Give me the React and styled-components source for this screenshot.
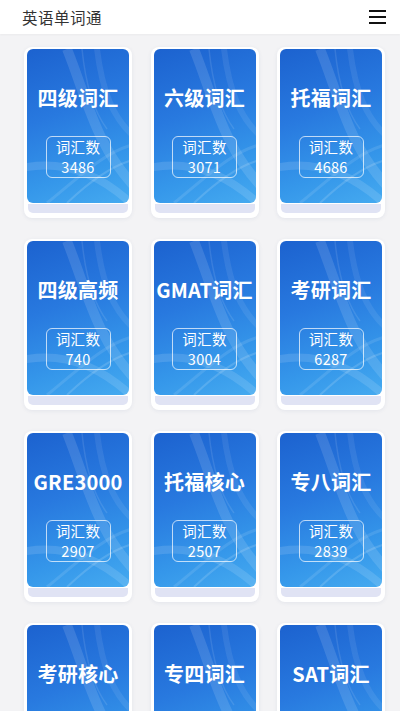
import styled, { createGlobalStyle } from 'styled-components';

const GlobalStyle = createGlobalStyle`
  html, body {
    margin: 0;
    padding: 0;
    background: #f3f3f5;
    font-family: "Noto Sans CJK SC", "Noto Sans", sans-serif;
    overflow: hidden;
  }
`;

const Page = styled.div`
  width: 400px;
  min-height: 711px;
  background: #f3f3f5;
`;

const Header = styled.header`
  height: 34px;
  background: #fff;
  display: flex;
  align-items: center;
  justify-content: space-between;
  padding: 0 13px 0 22px;
  box-sizing: border-box;
  box-shadow: 0 1px 2px rgba(0, 0, 0, 0.04);
`;

const Title = styled.h1`
  margin: 0;
  font-size: 15.5px;
  font-weight: 400;
  color: #333;
  letter-spacing: 0.5px;
`;

const MenuButton = styled.button`
  width: 20px;
  height: 20px;
  border: 0;
  background: none;
  display: flex;
  flex-direction: column;
  justify-content: space-between;
  align-items: center;
  padding: 3px 0;
  box-sizing: border-box;

  span {
    display: block;
    width: 17px;
    height: 2px;
    background: #111;
  }
`;

const Grid = styled.div`
  display: grid;
  grid-template-columns: repeat(3, 108px);
  column-gap: 18.5px;
  row-gap: 21px;
  padding: 13px 0 0 24px;
`;

const Card = styled.div`
  background: #fff;
  border-radius: 8px;
  padding: 2px 3px 5px;
  box-shadow: 0 1px 4px rgba(40, 60, 120, 0.08);
  display: flex;
  flex-direction: column;
`;

const Cover = styled.div`
  position: relative;
  height: 154px;
  border-radius: 6px;
  overflow: hidden;
  background: linear-gradient(160deg, #1c62cf 0%, #2879df 40%, #3597ea 75%, #45aaf0 100%);
  display: flex;
  flex-direction: column;
  align-items: center;
  color: #fff;
`;

const Streaks = styled.svg`
  position: absolute;
  inset: 0;
  width: 100%;
  height: 100%;
  pointer-events: none;
`;

const Name = styled.div`
  position: relative;
  margin-top: 36px;
  font-size: 20px;
  font-weight: 700;
  line-height: 26px;
  white-space: nowrap;
  letter-spacing: 0.2px;
`;

const CountBox = styled.div`
  position: relative;
  margin-top: 25px;
  width: 65px;
  height: 42px;
  box-sizing: border-box;
  border: 1px solid rgba(255, 255, 255, 0.7);
  border-radius: 6px;
  display: flex;
  flex-direction: column;
  align-items: center;
  justify-content: center;
  font-size: 14.5px;
  line-height: 20px;
  letter-spacing: 0.3px;
`;

const Strip = styled.div`
  height: 9px;
  margin: 1px 1px 0;
  background: #e0e3f4;
  border-radius: 0 0 5px 5px;
`;

const books = [
  { name: '四级词汇', count: 3486 },
  { name: '六级词汇', count: 3071 },
  { name: '托福词汇', count: 4686 },
  { name: '四级高频', count: 740 },
  { name: 'GMAT词汇', count: 3004 },
  { name: '考研词汇', count: 6287 },
  { name: 'GRE3000', count: 2907 },
  { name: '托福核心', count: 2507 },
  { name: '专八词汇', count: 2839 },
  { name: '考研核心', count: 0 },
  { name: '专四词汇', count: 0 },
  { name: 'SAT词汇', count: 0 },
];

function Waves() {
  return (
    <Streaks viewBox="0 0 102 154" preserveAspectRatio="none">
      <path d="M40 0 C60 50 70 100 110 140" stroke="rgba(255,255,255,0.12)" strokeWidth="10" fill="none" />
      <path d="M70 0 C75 40 85 70 110 90" stroke="rgba(255,255,255,0.08)" strokeWidth="6" fill="none" />
      <path d="M-10 120 C30 110 70 120 110 160" stroke="rgba(255,255,255,0.12)" strokeWidth="8" fill="none" />
      <path d="M20 154 C50 130 80 100 110 95" stroke="rgba(255,255,255,0.1)" strokeWidth="3" fill="none" />
      <path d="M40 154 C60 135 85 115 110 110" stroke="rgba(255,255,255,0.14)" strokeWidth="2" fill="none" />
      <path d="M55 0 C58 30 65 60 80 80" stroke="rgba(255,255,255,0.1)" strokeWidth="1.5" fill="none" />
    </Streaks>
  );
}

export default function App() {
  return (
    <Page>
      <GlobalStyle />
      <Header>
        <Title>英语单词通</Title>
        <MenuButton aria-label="菜单">
          <span />
          <span />
          <span />
        </MenuButton>
      </Header>
      <Grid>
        {books.map((b) => (
          <Card key={b.name}>
            <Cover>
              <Waves />
              <Name>{b.name}</Name>
              {b.count > 0 && (
                <CountBox>
                  <span>词汇数</span>
                  <span>{b.count}</span>
                </CountBox>
              )}
            </Cover>
            <Strip />
          </Card>
        ))}
      </Grid>
    </Page>
  );
}
